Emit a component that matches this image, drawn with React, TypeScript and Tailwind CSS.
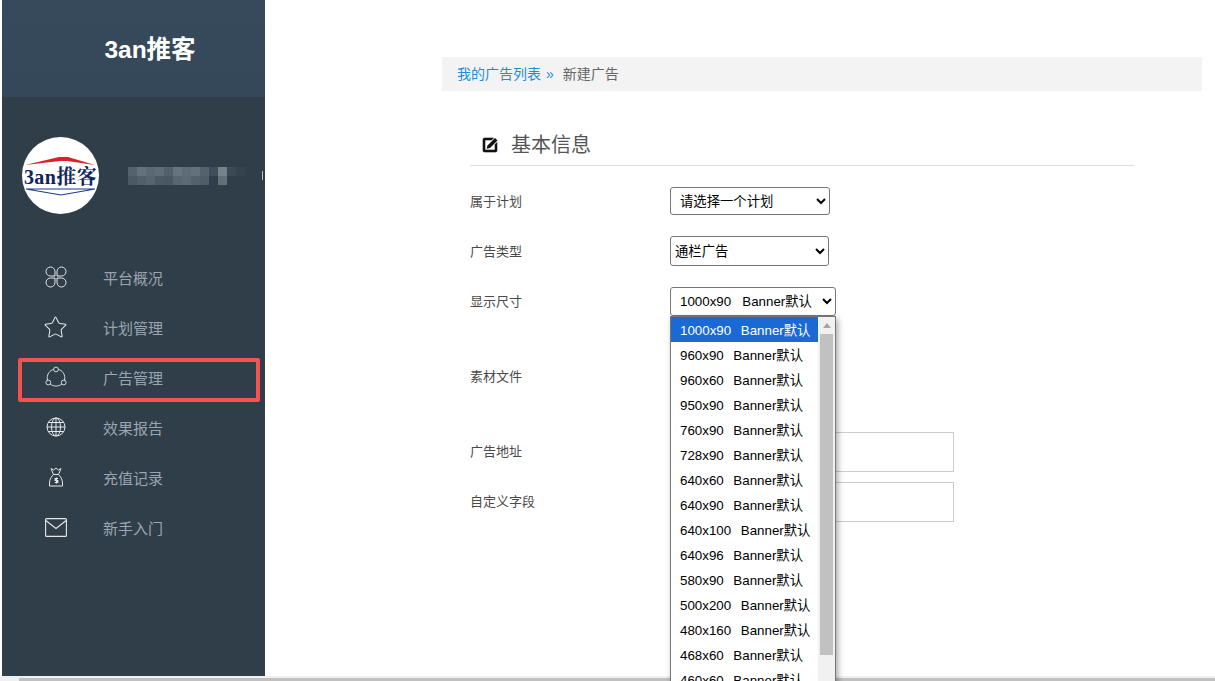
import { Star } from 'lucide-react';
import type { ReactNode } from 'react';

const FONT = "font-['Liberation_Sans','Noto_Sans_CJK_SC',sans-serif]";

function CloverIcon() {
  return (
    <svg width="22" height="22" viewBox="0 0 22 22" fill="none" stroke="currentColor" strokeWidth="1">
      <path d="M10 10V5.500a4.500 4.500 0 1 0-4.500 4.500Z" />
      <path d="M12 10V5.500a4.500 4.500 0 1 1 4.500 4.500Z" />
      <path d="M10 12v4.500a4.500 4.500 0 1 1-4.500-4.500Z" />
      <path d="M12 12v4.500a4.500 4.500 0 1 0 4.500-4.500Z" />
    </svg>
  );
}

function CirclesIcon() {
  return (
    <svg width="22" height="22" viewBox="0 0 24 24" fill="none" stroke="currentColor" strokeWidth="1">
      <path d="M9.400 3.600C5.400 4.800 2.400 8.600 2.400 13c0 1 .2 2 .4 2.800" />
      <path d="M14.600 3.600c4 1.200 7 5 7 9.400 0 1-.2 2-.4 2.800" />
      <path d="M5.600 19.600C7.300 21 9.500 21.900 12 21.900s4.700-.9 6.400-2.300" />
      <circle cx="12" cy="3.800" r="2.600" />
      <circle cx="3.600" cy="18" r="2.600" />
      <circle cx="20.400" cy="18" r="2.600" />
    </svg>
  );
}

function GlobeIcon() {
  return (
    <svg width="20" height="20" viewBox="0 0 20 20" fill="none" stroke="currentColor" strokeWidth="1">
      <circle cx="10" cy="10" r="9" />
      <ellipse cx="10" cy="10" rx="4.500" ry="9" />
      <path d="M10 1v18M1 10h18M2.400 5.500h15.200M2.400 14.500h15.200" />
    </svg>
  );
}

function BagIcon() {
  return (
    <svg width="16" height="20" viewBox="0 0 16 20" fill="none" stroke="currentColor" strokeWidth="1">
      <path d="M5.500 7.500 3 1.500l2.500 1.500L8 1l2.500 2L13 1.500l-2.500 6" />
      <path d="M5.500 7.500h5c1.500 1.500 4 4.500 4 8.500v3h-13v-3c0-4 2.500-7 4-8.500Z" />
      <path d="M10 11.500H7.200v2h2.600v2H6.800M8.500 10.500v6" strokeWidth="1.200" />
    </svg>
  );
}

function MailIcon() {
  return (
    <svg width="22" height="19" viewBox="0 0 22 19" fill="none" stroke="currentColor" strokeWidth="1.100">
      <rect x="0.600" y="0.600" width="20.800" height="17.800" rx="1" />
      <path d="M0.800 2.500 11 10.500l10.200-8" />
    </svg>
  );
}

function Logo() {
  return (
    <div className="w-[77px] h-[77px] rounded-full bg-white overflow-hidden flex flex-col items-center justify-center shrink-0">
      <svg width="75" height="10" viewBox="0 0 75 10" className="mb-[1px]">
        <polygon points="2,9 36,1 45,1 72,9 44,5 37,5" fill="#d9232b" />
      </svg>
      <div className="font-['Liberation_Serif','Noto_Serif_CJK_SC','Noto_Sans_CJK_SC',serif] text-[20px] leading-[20px] font-bold text-[#10245f] whitespace-nowrap tracking-[0.4px]">
        3an推客
      </div>
      <svg width="75" height="8" viewBox="0 0 75 8" className="mt-[1px]">
        <polygon points="3,1 72,1 38,7" fill="none" stroke="#1c3a86" strokeWidth="1.200" />
      </svg>
    </div>
  );
}

interface NavItem {
  label: string;
  icon: ReactNode;
  boxed?: boolean;
}

const navItems: NavItem[] = [
  { label: '平台概况', icon: <CloverIcon /> },
  { label: '计划管理', icon: <Star size={25} strokeWidth={1} /> },
  { label: '广告管理', icon: <CirclesIcon />, boxed: true },
  { label: '效果报告', icon: <GlobeIcon /> },
  { label: '充值记录', icon: <BagIcon /> },
  { label: '新手入门', icon: <MailIcon /> },
];

const sizes: [string, boolean][] = [
  ['1000x90', true],
  ['960x90', false],
  ['960x60', false],
  ['950x90', false],
  ['760x90', false],
  ['728x90', false],
  ['640x60', false],
  ['640x90', false],
  ['640x100', false],
  ['640x96', false],
  ['580x90', false],
  ['500x200', false],
  ['480x160', false],
  ['468x60', false],
  ['460x60', false],
];

const blurTop = ['#59666f', '#6b7882', '#616e77', '#66737b', '#57646e', '#6d7a83', '#65727c', '#6a7780', '#5a6770', '#414f5a', '#7e8a90', '#3e4c57', '#364450'];
const blurBottom = ['#4f5c66', '#56636d', '#5c6871', '#505d67', '#4d5a64', '#5e6a74', '#626e78', '#59656f', '#54616b', '#303e49', '#6a767e', '#303e49', '#303e49'];

function Sidebar() {
  return (
    <aside className="w-[263px] ml-[2px] h-[676px] shrink-0 bg-[#303e49] flex flex-col">
      <div className="h-[97px] bg-gradient-to-b from-[#364a5b] to-[#34485a] flex items-center justify-center pl-[33px] pt-[4px]">
        <span className="text-white font-bold text-[24.500px] leading-none">3an推客</span>
      </div>
      <div className="flex items-center mt-[40px] pl-[20px]">
        <Logo />
        <div className="ml-[29px] flex flex-col opacity-90">
          <div className="flex h-[9px]">
            {blurTop.map((c, i) => (
              <span key={i} className="w-[9px] h-full" style={{ backgroundColor: c }} />
            ))}
          </div>
          <div className="flex h-[9px]">
            {blurBottom.map((c, i) => (
              <span key={i} className="w-[9px] h-full" style={{ backgroundColor: c }} />
            ))}
          </div>
        </div>
        <span className="ml-[17px] w-px h-[9px] bg-[#b8bfc4]" />
      </div>
      <nav className="mt-[40px] flex flex-col pl-[16px]">
        {navItems.map(item => (
          <div key={item.label} className="relative h-[50px] w-[242px] flex items-center text-[#9aa5b1] text-[15px]">
            {item.boxed && <span className="absolute inset-x-0 top-[4px] bottom-[2px] border-4 border-[#f4544f] rounded-[2px]" />}
            <span className="w-[75px] flex justify-center text-[#e4e8ea] mt-[-4px]">{item.icon}</span>
            <span className="ml-[10px] pt-[1px]">{item.label}</span>
          </div>
        ))}
      </nav>
    </aside>
  );
}

function SizeDropdown() {
  return (
    <div className="absolute left-0 top-[29px] w-[166px] h-[400px] bg-white border border-[#767676] z-10 flex shadow-[2px_3px_6px_rgba(0,0,0,0.35)] overflow-hidden">
      <ul className="flex-1 text-[13.330px] text-black [word-spacing:-0.5px]">
        {sizes.map(([size, active]) => (
          <li
            key={size}
            className={`h-[25px] flex items-center pl-[9px] pt-[4px] whitespace-pre ${active ? 'bg-[#1a69d4] text-white' : ''}`}
          >
            {size}   Banner默认
          </li>
        ))}
      </ul>
      <div className="w-[17px] bg-[#f1f1f1] flex flex-col items-center">
        <div className="h-[17px] flex items-center justify-center">
          <span className="w-0 h-0 border-x-[4px] border-x-transparent border-b-[5px] border-b-[#a3a3a3]" />
        </div>
        <div className="w-[13px] h-[321px] bg-[#c1c1c1]" />
      </div>
    </div>
  );
}

function Field({ label, children, height }: { label: string; children?: ReactNode; height: string }) {
  return (
    <div className={`flex items-center ${height}`}>
      <label className="w-[200px] shrink-0 pt-[2px] text-[13px] text-[#4a4a4a]">{label}</label>
      {children}
    </div>
  );
}

function Form() {
  return (
    <main className="flex-1 min-w-0 pt-[57px] pl-[177px] pr-[13px]">
      <div className="h-[34px] bg-[#f3f3f3] flex items-center pl-[15px] text-[14px] text-[#666]">
        <span className="text-[#1e8fd5]">我的广告列表</span>
        <span className="text-[#1e8fd5] ml-[5px]">»</span>
        <span className="ml-[9px]">新建广告</span>
      </div>
      <div className="mt-[34px] ml-[28px] mr-[68px]">
        <div className="h-[41px] border-b border-[#dcdcdc] flex items-center pl-[12px] pb-[1px]">
          <svg width="16" height="16" viewBox="0 0 16 16" className="shrink-0">
            <path d="M2.500 1H11.500L9.500 3H3v10h10V7.500l2-2v8A1.500 1.500 0 0 1 13.500 15h-11A1.500 1.500 0 0 1 1 13.500v-11A1.500 1.500 0 0 1 2.500 1Z" fill="#111" stroke="#111" strokeWidth="0.600" />
            <path d="M13 1 15.500 3.500 8 11 4.600 11.800 5.500 8.500Z" fill="#111" />
          </svg>
          <h2 className="ml-[13px] text-[20px] font-normal text-[#555]">基本信息</h2>
        </div>
        <div className="mt-[10px] flex flex-col">
          <Field label="属于计划" height="h-[50px]">
            <select className="w-[160px] h-[28px] border border-[#767676] rounded-[3px] bg-white text-[13.330px] text-black pl-[5px]">
              <option>请选择一个计划</option>
            </select>
          </Field>
          <Field label="广告类型" height="h-[50px]">
            <select className="w-[159px] h-[30px] border border-[#767676] rounded-[3px] bg-white text-[13.330px] text-black">
              <option>通栏广告</option>
            </select>
          </Field>
          <Field label="显示尺寸" height="h-[50px]">
            <div className="relative">
              <select className="block w-[166px] h-[29px] border border-[#767676] rounded-[3px] bg-white text-[13.330px] text-black pl-[5px]">
                <option>{'1000x90\u00a0\u00a0\u00a0Banner默认'}</option>
              </select>
              <SizeDropdown />
            </div>
          </Field>
          <Field label="素材文件" height="h-[100px]" />
          <Field label="广告地址" height="h-[50px]">
            <input className="mt-[2px] w-[284px] h-[40px] border border-[#cccccc] bg-white" />
          </Field>
          <Field label="自定义字段" height="h-[50px]">
            <input className="mt-[2px] w-[284px] h-[40px] border border-[#cccccc] bg-white" />
          </Field>
        </div>
      </div>
    </main>
  );
}

export default function App() {
  return (
    <div className={`relative w-[1215px] h-[681px] overflow-hidden bg-white ${FONT}`}>
      <div className="flex h-[676px]">
        <Sidebar />
        <Form />
      </div>
      <div className="h-[5px] bg-[#f0f0f0] pl-[19px] pt-[2px]">
        <div className="h-[3px] bg-[#c0c0c0]" />
      </div>
    </div>
  );
}
